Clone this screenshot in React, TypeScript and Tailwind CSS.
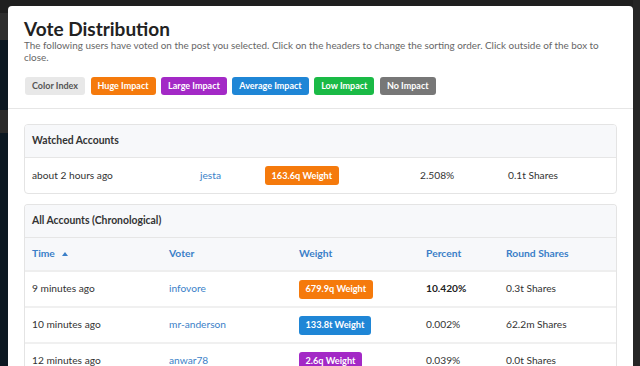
import React from 'react';

type Impact = 'huge' | 'large' | 'average' | 'low' | 'none';

const impactClass: Record<Impact, string> = {
  huge: 'bg-[#f57a0c]',
  large: 'bg-[#a329c6]',
  average: 'bg-[#1f86d6]',
  low: 'bg-[#1aba46]',
  none: 'bg-[#777777]',
};

function Badge({ impact, children }: { impact: Impact; children: React.ReactNode }) {
  return (
    <span
      className={`inline-flex h-[19px] items-center rounded-[3px] px-[6.5px] text-[9.2px] font-bold text-white ${impactClass[impact]}`}
    >
      {children}
    </span>
  );
}

const legend: { label: string; impact: Impact }[] = [
  { label: 'Huge Impact', impact: 'huge' },
  { label: 'Large Impact', impact: 'large' },
  { label: 'Average Impact', impact: 'average' },
  { label: 'Low Impact', impact: 'low' },
  { label: 'No Impact', impact: 'none' },
];

const votes = [
  { time: '9 minutes ago', voter: 'infovore', weight: '679.9q Weight', impact: 'huge' as Impact, percent: '10.420%', bold: true, shares: '0.3t Shares' },
  { time: '10 minutes ago', voter: 'mr-anderson', weight: '133.8t Weight', impact: 'average' as Impact, percent: '0.002%', bold: false, shares: '62.2m Shares' },
  { time: '12 minutes ago', voter: 'anwar78', weight: '2.6q Weight', impact: 'large' as Impact, percent: '0.039%', bold: false, shares: '0.0t Shares' },
];

export default function App() {
  return (
    <div
      className="flex h-[366px] w-[640px] overflow-hidden bg-[#1f1f1f] text-[#333]"
      style={{ fontFamily: 'Lato, "Open Sans", sans-serif' }}
    >
      {/* page behind the overlay */}
      <div className="flex w-[8px] shrink-0 flex-col">
        <div className="h-[13px] bg-[#1f1f1f]" />
        <div className="h-[27px] bg-[#2e2e2e]" />
        <div className="h-[70px] bg-[#0c1822]" />
        <div className="h-[23px] bg-[#2a2a2a]" />
        <div className="flex-1 bg-[#0c1822]" />
      </div>

      <div className="mt-[6px] flex w-[625px] shrink-0 flex-col rounded-t-[4px] bg-white">
        <div className="px-[16px] pt-[11px]">
          <h1 className="text-[19px] font-bold leading-[24px] text-[#222]">Vote Distribution</h1>
          <p className="mt-[-2px] text-[9.9px] leading-[12px] text-[#666]">
            The following users have voted on the post you selected. Click on the headers to change the sorting order. Click outside of the box to close.
          </p>
          <div className="mt-[14px] flex gap-[5.5px] pl-[1px]">
            <span className="inline-flex h-[18px] items-center rounded-[3px] bg-[#e8e8e8] px-[7px] text-[9px] font-bold text-[#555]">
              Color Index
            </span>
            {legend.map((l) => (
              <span
                key={l.label}
                className={`inline-flex h-[18px] items-center rounded-[3px] px-[7px] text-[9px] font-bold text-white ${impactClass[l.impact]}`}
              >
                {l.label}
              </span>
            ))}
          </div>
        </div>

        <div className="mt-[13px] border-t border-[#e6e6e6] px-[16px] pt-[15px]">
          {/* Watched */}
          <div className="w-[593px] overflow-hidden rounded-[4px] border border-[#e4e4e4]">
            <div className="flex h-[33px] items-center border-b border-[#e6e6e6] bg-[#f7f8fa] px-[7px] text-[10.4px] font-bold text-[#333]">
              Watched Accounts
            </div>
            <div className="grid h-[35px] grid-cols-[168px_65px_155px_88px_1fr] items-center px-[7px] text-[10.2px]">
              <span>about 2 hours ago</span>
              <span className="text-[#3b7fc8]">jesta</span>
              <span>
                <Badge impact="huge">163.6q Weight</Badge>
              </span>
              <span>2.508%</span>
              <span>0.1t Shares</span>
            </div>
          </div>

          {/* All accounts */}
          <div className="mt-[10px] w-[593px] overflow-hidden rounded-t-[4px] border border-b-0 border-[#e4e4e4]">
            <div className="flex h-[33px] items-center border-b border-[#e6e6e6] bg-[#f7f8fa] px-[7px] text-[10.4px] font-bold text-[#333]">
              All Accounts (Chronological)
            </div>
            <div className="grid h-[34px] grid-cols-[137px_130px_127px_80px_1fr] items-center border-b-2 border-[#eeeeee] bg-[#f7f8fa] px-[7px] text-[10.3px] font-bold text-[#3b7fc8]">
              <span className="flex items-center gap-[7px]">
                Time
                <svg width="6" height="4" viewBox="0 0 6 4">
                  <path d="M0 4 L3 0 L6 4 Z" fill="#3b7fc8" />
                </svg>
              </span>
              <span>Voter</span>
              <span>Weight</span>
              <span>Percent</span>
              <span>Round Shares</span>
            </div>
            {votes.map((v) => (
              <div
                key={v.voter}
                className="grid h-[36px] grid-cols-[137px_130px_127px_80px_1fr] items-center border-b-2 border-[#f0f0f0] px-[7px] text-[10.2px]"
              >
                <span>{v.time}</span>
                <span className="text-[#3b7fc8]">{v.voter}</span>
                <span>
                  <Badge impact={v.impact}>{v.weight}</Badge>
                </span>
                <span className={v.bold ? 'font-bold text-[#222]' : ''}>{v.percent}</span>
                <span>{v.shares}</span>
              </div>
            ))}
          </div>
        </div>
      </div>

      <div className="flex-1 bg-[#262626]" />
    </div>
  );
}
